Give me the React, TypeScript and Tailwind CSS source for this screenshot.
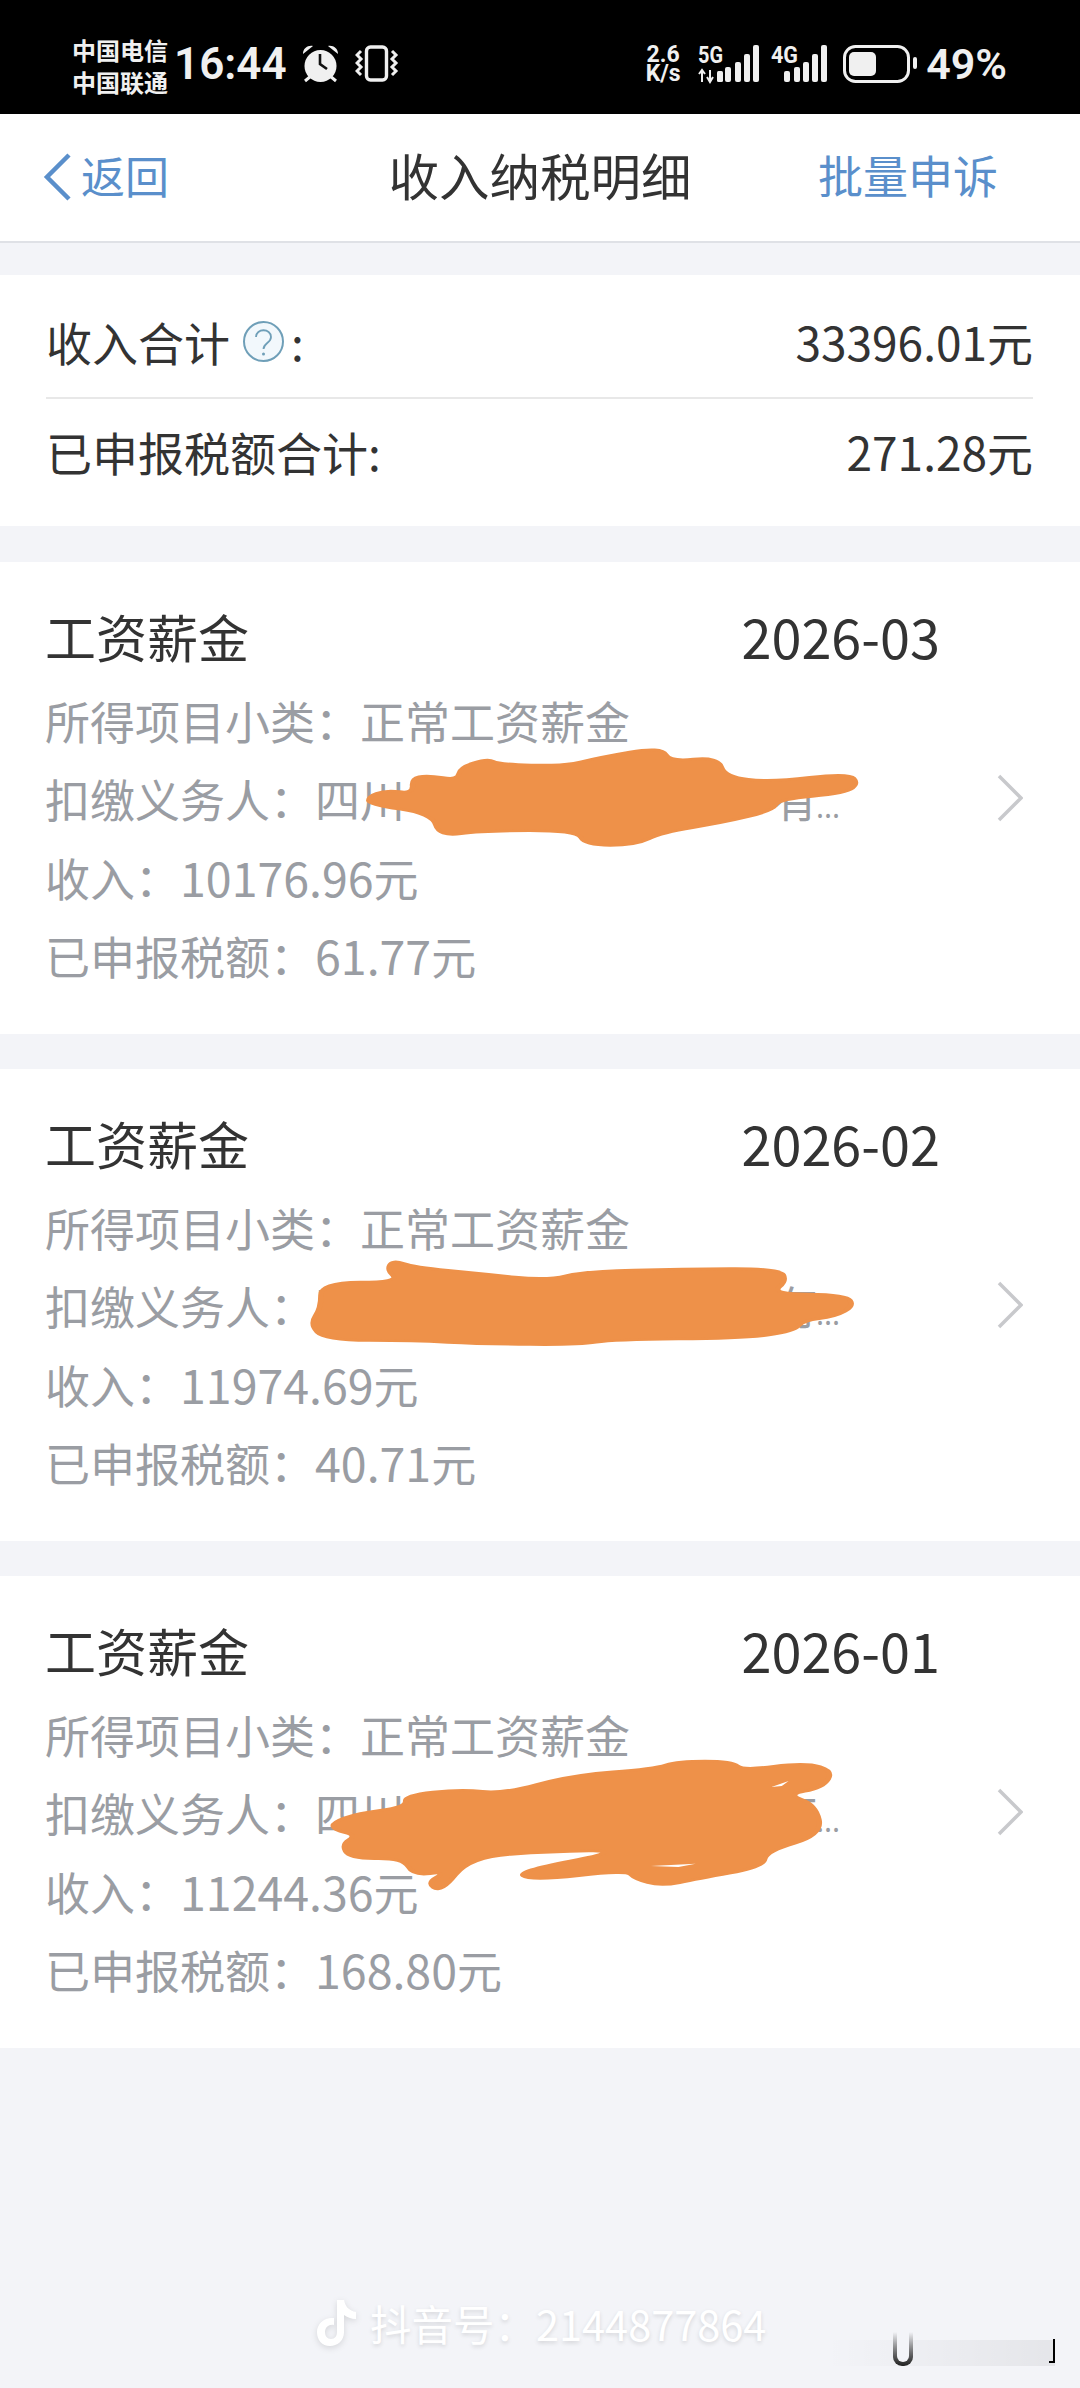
const cards = [
  {
    date: '2026-03',
    income: '10176.96',
    tax: '61.77',
    scribbleClass: 'top-[18px] h-[480px]',
    viewBox: '0 0 1568 1440',
    points: '535,650 560,630 600,640 598,595 620,585 665,600 668,562 708,535 722,552 820,558 870,532 960,500 972,545 1042,530 1052,590 1120,606 1232,578 1246,610 1228,640 1130,658 1122,692 1050,728 960,758 922,796 850,796 838,752 700,752 638,770 628,702 536,674',
    holes: '',
  },
  {
    date: '2026-02',
    income: '11974.69',
    tax: '40.71',
    scribbleClass: 'top-[162px] h-[140px]',
    viewBox: '0 0 1568 420',
    points: '570,86 600,108 700,128 795,148 850,120 990,114 1132,112 1142,150 1120,188 1228,190 1240,225 1212,258 1166,268 1152,302 1080,322 890,326 840,342 700,339 600,329 472,328 450,280 466,230 466,155 580,152 562,118',
    holes: '',
  },
  {
    date: '2026-01',
    income: '11244.36',
    tax: '168.80',
    scribbleClass: 'top-[125px] h-[340px]',
    viewBox: '0 0 1568 1020',
    points: '482,365 520,336 590,318 588,282 670,264 730,278 830,222 950,203 985,180 1062,180 1078,208 1170,184 1210,210 1194,262 1142,280 1184,310 1194,402 1112,452 1108,498 1012,534 960,556 922,534 910,508 770,540 750,510 910,448 800,452 682,468 640,576 620,545 648,512 600,524 586,472 508,474 496,430 518,402 486,388',
    holes: 'M945 495L1010 488L985 498ZM1120 258L1145 240L1135 255Z',
  },
]

// rounds the marker outline: curve through the midpoints of each edge
function smooth(points: string) {
  const pts = points.split(' ').map((p) => p.split(',').map(Number))
  const mid = (a: number[], b: number[]) => `${(a[0] + b[0]) / 2} ${(a[1] + b[1]) / 2}`
  let d = `M${mid(pts[pts.length - 1], pts[0])}`
  pts.forEach((p, i) => {
    d += `Q${p[0]} ${p[1]} ${mid(p, pts[(i + 1) % pts.length])}`
  })
  return d + 'Z'
}

function StatusBar() {
  return (
    <div className="h-[114px] bg-black pt-[18px] flex items-center pl-[72px] pr-[73px] text-[#f0f0f0]">
      <div className="w-[96px] text-[24px] leading-[32px] font-bold">
        <div>中国电信</div>
        <div>中国联通</div>
      </div>
      <div className="ml-[6px] -mt-[4px] text-[44px] leading-none font-semibold font-['Roboto',sans-serif]">16:44</div>
      <svg className="ml-[15px] -mt-[4px]" width="38" height="38" viewBox="0 0 38 38">
        <circle cx="18.5" cy="21" r="16" fill="#f0f0f0" />
        <path d="M18 9V19L25 24" fill="none" stroke="#111" strokeWidth="2.6" />
        <path d="M1 9C1 3 6 0 11 1ZM36 9C36 3 31 0 26 1Z" fill="#f0f0f0" />
        <path d="M3 36L9 31M34 36L28 31" stroke="#f0f0f0" strokeWidth="3" />
      </svg>
      <svg className="ml-[15px] -mt-[4px]" width="44" height="38" viewBox="0 0 44 38">
        <rect x="11.5" y="2" width="20" height="33" rx="4" fill="none" stroke="#f0f0f0" strokeWidth="3.4" />
        <path d="M6 6L2 10L6 14L2 18L6 22L2 26L6 30" fill="none" stroke="#f0f0f0" strokeWidth="3" />
        <path d="M37 6L41 10L37 14L41 18L37 22L41 26L37 30" fill="none" stroke="#f0f0f0" strokeWidth="3" />
      </svg>

      <div className="ml-auto -mt-[4px] w-[40px] text-center text-[23px] leading-[19px] font-bold font-['Roboto',sans-serif]">
        <div>2.6</div>
        <div>K/s</div>
      </div>
      <svg className="ml-[15px] -mt-[4px] overflow-visible" width="130" height="38" viewBox="0 0 130 38">
        <text x="0" y="18" fontSize="24" fontWeight="700" fontFamily="Roboto" fill="#f0f0f0" textLength="25" lengthAdjust="spacingAndGlyphs">5G</text>
        <path d="M4 37V26M1 29L4 25L7 29M12 25V36M9 32L12 37L15 32" fill="none" stroke="#f0f0f0" strokeWidth="2" />
        <rect x="19" y="26" width="6" height="11" rx="1.5" fill="#f0f0f0" />
        <rect x="27" y="22" width="6" height="15" rx="2" fill="#f0f0f0" />
        <rect x="37" y="17" width="6" height="20" rx="2" fill="#f0f0f0" />
        <rect x="46" y="9" width="6" height="28" rx="2" fill="#f0f0f0" />
        <rect x="55" y="0" width="6" height="37" rx="2" fill="#f0f0f0" />
        <text x="73" y="18" fontSize="24" fontWeight="700" fontFamily="Roboto" fill="#f0f0f0" textLength="27" lengthAdjust="spacingAndGlyphs">4G</text>
        <rect x="86" y="26" width="6" height="11" rx="2" fill="#f0f0f0" />
        <rect x="96" y="22" width="6" height="15" rx="2" fill="#f0f0f0" />
        <rect x="105" y="17" width="6" height="20" rx="2" fill="#f0f0f0" />
        <rect x="114" y="9" width="6" height="28" rx="2" fill="#f0f0f0" />
        <rect x="123" y="0" width="6" height="37" rx="2" fill="#f0f0f0" />
      </svg>
      <svg className="ml-[15px] -mt-[4px]" width="75" height="38" viewBox="0 0 75 38">
        <rect x="1.5" y="1.5" width="64" height="35" rx="11" fill="none" stroke="#f0f0f0" strokeWidth="3" />
        <rect x="6" y="7" width="27" height="24" rx="5" fill="#f0f0f0" />
        <rect x="70" y="12" width="4" height="12" rx="2" fill="#f0f0f0" />
      </svg>
      <div className="ml-[8px] -mt-[4px] text-[43px] leading-none font-semibold font-['Roboto',sans-serif]">49%</div>
    </div>
  )
}

function NavBar() {
  return (
    <div className="h-[129px] pb-[6px] bg-white border-b-[2px] border-[#dfe1e6] grid grid-cols-[1fr_auto_1fr] items-center">
      <div className="pl-[43px] flex items-center text-[44px] text-[#5a8fcb]">
        <svg className="mt-[4px]" width="30" height="48" viewBox="0 0 30 48">
          <path d="M26 2L4 24L26 46" fill="none" stroke="#5a8fcb" strokeWidth="4.5" />
        </svg>
        <span className="ml-[8px]">返回</span>
      </div>
      <div className="text-[50.5px] text-[#333333]">收入纳税明细</div>
      <div className="pr-[82px] text-right text-[45px] text-[#5a8fcb]">批量申诉</div>
    </div>
  )
}

function Summary() {
  return (
    <div className="mt-[32px] h-[251px] bg-white pt-[12px] pl-[46px] pr-[47px] text-[46px] text-[#333333]">
      <div className="h-[112px] pb-[2px] border-b-[2px] border-[#e8e8e8] flex items-center justify-between">
        <div className="flex items-center">
          <span>收入合计</span>
          <svg className="ml-[12px]" width="43" height="43" viewBox="0 0 43 43">
            <circle cx="21.5" cy="21.5" r="19.5" fill="#f2f8fc" stroke="#6f9fb8" strokeWidth="2" />
            <path d="M14 17C14 8 29 8 29 17C29 23 21.5 23 21.5 29" fill="none" stroke="#6f9fb8" strokeWidth="1.8" />
            <circle cx="21.5" cy="34" r="1.5" fill="#6f9fb8" />
          </svg>
          <span className="ml-[6px]">:</span>
        </div>
        <span>33396.01元</span>
      </div>
      <div className="h-[105px] flex items-center justify-between">
        <span>已申报税额合计:</span>
        <span>271.28元</span>
      </div>
    </div>
  )
}

function Card({ card }: { card: (typeof cards)[number] }) {
  return (
    <div className="relative h-[472px] bg-white flex items-center pl-[45px]">
      <div className="w-[895px] h-full pt-[28px] text-[45px] leading-[78px] text-[#9a9da3]">
        <div className="h-[92px] flex items-center justify-between text-[#333333]">
          <span className="text-[51px]">工资薪金</span>
          <span className="text-[54px]">{card.date}</span>
        </div>
        <div>所得项目小类：正常工资薪金</div>
        <div className="h-[78px] w-[795px] flex justify-between">
          <span>扣缴义务人：四川</span>
          <span className="flex items-baseline">
            有<span className="font-['Noto_Sans',sans-serif] text-[30px] -ml-[2px]">...</span>
          </span>
        </div>
        <div className="h-[78px]">
          收入：<span className="text-[46.5px]">{card.income}</span>元
        </div>
        <div className="h-[78px]">
          已申报税额：<span className="text-[46.5px]">{card.tax}</span>元
        </div>
      </div>
      <svg className="ml-[57px]" width="26" height="48" viewBox="0 0 26 48">
        <path d="M2 2L24 24L2 46" fill="none" stroke="#c8c9cc" strokeWidth="3.5" />
      </svg>
      <svg
        className={`absolute left-0 w-[1080px] pointer-events-none ${card.scribbleClass}`}
        viewBox={card.viewBox}
        preserveAspectRatio="none"
      >
        <path d={smooth(card.points)} fill="#ee9149" stroke="#ee9149" strokeWidth="8" strokeLinejoin="round" />
        {card.holes && <path d={card.holes} fill="#ffffff" />}
      </svg>
    </div>
  )
}

export default function App() {
  return (
    <div className="relative w-[1080px] h-[2388px] overflow-hidden bg-[#f3f4f8] font-['Noto_Sans_CJK_SC','Noto_Sans',sans-serif]">
      <StatusBar />
      <NavBar />
      <Summary />
      <div className="mt-[36px] flex flex-col gap-[35px]">
        {cards.map((c) => (
          <Card key={c.date} card={c} />
        ))}
      </div>

      {/* watermark */}
      <div className="absolute left-[316px] top-[2296px] flex items-center text-[41.5px] leading-[54px] text-white [text-shadow:0_2px_4px_rgba(0,0,0,0.13)]">
        <svg width="42" height="50" viewBox="0 0 42 50" className="drop-shadow-[0_2px_3px_rgba(0,0,0,0.12)]">
          <path
            d="M21 2H28C29 8 33 13 40 14V21C35 21 31 19 28 17V34C28 43 21 48 14 48C6 48 1 42 1 34C1 25 9 19 18 20V27C13 26 9 29 9 34C9 38 11 41 15 41C19 41 21 38 21 34Z"
            fill="#ffffff"
          />
        </svg>
        <span className="ml-[12px]">抖音号：2144877864</span>
      </div>
      <div className="absolute left-[825px] top-[2340px] w-[230px] h-[26px] bg-gradient-to-r from-transparent via-black/[0.03] to-black/[0.06]" />
      <div className="absolute left-[893px] top-[2332px] w-[20px] h-[34px] rounded-b-[9px] bg-gradient-to-b from-[#f3f4f8] to-[#222222]">
        <div className="mx-[4px] h-[30px] rounded-b-[6px] bg-[#f3f4f8]" />
      </div>
      <div className="absolute left-[1049px] top-[2339px] w-[6px] h-[24px] border-r-[2px] border-b-[2px] border-black" />
    </div>
  )
}
